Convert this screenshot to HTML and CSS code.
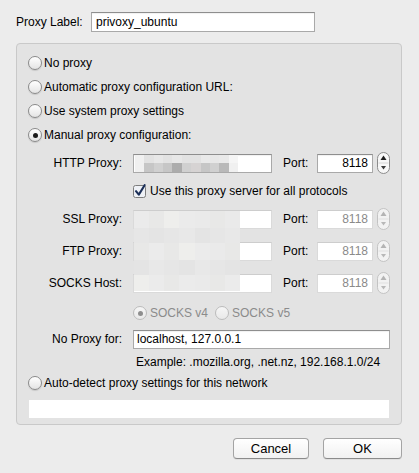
FILE: index.html
```html
<!DOCTYPE html>
<html>
<head>
<meta charset="utf-8">
<link rel="stylesheet" href="styles.css">
</head>
<body>
<div class="dialog">
  <div class="label-row">
    <span class="lbl">Proxy Label:</span>
    <div class="field label-field">privoxy_ubuntu</div>
  </div>

  <div class="panel">
    <div class="opt"><span class="radio"></span><span>No proxy</span></div>
    <div class="opt"><span class="radio"></span><span>Automatic proxy configuration URL:</span></div>
    <div class="opt"><span class="radio"></span><span>Use system proxy settings</span></div>
    <div class="opt"><span class="radio on"></span><span>Manual proxy configuration:</span></div>

    <div class="frow">
      <span class="flabel">HTTP Proxy:</span>
      <div class="field host">
        <div class="mosaic">
          <i class="t0"></i><i class="t1"></i><i class="t2"></i><i class="t1"></i><i class="t2"></i><i class="t1"></i><i class="t1"></i><i class="t3"></i><i class="t2"></i><i class="t3"></i><i class="t4"></i>
          <i class="t0"></i><i class="b1"></i><i class="b2"></i><i class="b1"></i><i class="b3"></i><i class="b2"></i><i class="b4"></i><i class="b1"></i><i class="b2"></i><i class="b5"></i><i class="t0"></i>
        </div>
      </div>
      <span class="plabel">Port:</span>
      <div class="field port">8118</div>
      <svg class="stepper" width="13" height="22" viewBox="0 0 13 22">
        <rect x="0.5" y="0.5" width="12" height="21" rx="6" fill="#f7f7f7" stroke="#8c8c8c"/>
        <line x1="1.5" y1="11" x2="11.5" y2="11" stroke="#d6d6d6"/>
        <path d="M6.5 3.5 L9.5 8 H3.5 Z" fill="#1e1e1e"/>
        <path d="M6.5 17.5 L9 14 H4 Z" fill="#3a3a3a"/>
      </svg>
    </div>

    <div class="crow">
      <svg class="check" width="14" height="14" viewBox="0 0 14 14">
        <rect x="0.5" y="1.5" width="12" height="12" rx="2" fill="#eef1f6" stroke="#7d7d7d"/>
        <path d="M3 7.2 L5.8 10.6 L11.6 1.2" fill="none" stroke="#1b2f58" stroke-width="2.1" stroke-linecap="round" stroke-linejoin="round"/>
      </svg>
      <span>Use this proxy server for all protocols</span>
    </div>

    <div class="frow">
      <span class="flabel">SSL Proxy:</span>
      <div class="field host dis"></div>
      <span class="plabel">Port:</span>
      <div class="field port dis">8118</div>
      <svg class="stepper" width="13" height="22" viewBox="0 0 13 22">
        <rect x="0.5" y="0.5" width="12" height="21" rx="6" fill="#f2f2f2" stroke="#c3c3c3"/>
        <line x1="1.5" y1="11" x2="11.5" y2="11" stroke="#e0e0e0"/>
        <path d="M6.5 3.5 L9.5 8 H3.5 Z" fill="#b4b4b4"/>
        <path d="M6.5 17.5 L9 14 H4 Z" fill="#b8b8b8"/>
      </svg>
    </div>
    <div class="frow">
      <span class="flabel">FTP Proxy:</span>
      <div class="field host dis"></div>
      <span class="plabel">Port:</span>
      <div class="field port dis">8118</div>
      <svg class="stepper" width="13" height="22" viewBox="0 0 13 22">
        <rect x="0.5" y="0.5" width="12" height="21" rx="6" fill="#f2f2f2" stroke="#c3c3c3"/>
        <line x1="1.5" y1="11" x2="11.5" y2="11" stroke="#e0e0e0"/>
        <path d="M6.5 3.5 L9.5 8 H3.5 Z" fill="#b4b4b4"/>
        <path d="M6.5 17.5 L9 14 H4 Z" fill="#b8b8b8"/>
      </svg>
    </div>
    <div class="frow">
      <span class="flabel">SOCKS Host:</span>
      <div class="field host dis"></div>
      <span class="plabel">Port:</span>
      <div class="field port dis">8118</div>
      <svg class="stepper" width="13" height="22" viewBox="0 0 13 22">
        <rect x="0.5" y="0.5" width="12" height="21" rx="6" fill="#f2f2f2" stroke="#c3c3c3"/>
        <line x1="1.5" y1="11" x2="11.5" y2="11" stroke="#e0e0e0"/>
        <path d="M6.5 3.5 L9.5 8 H3.5 Z" fill="#b4b4b4"/>
        <path d="M6.5 17.5 L9 14 H4 Z" fill="#b8b8b8"/>
      </svg>
    </div>

    <div class="srow">
      <span class="radio dis on"></span><span class="dtext">SOCKS v4</span>
      <span class="radio dis v5"></span><span class="dtext">SOCKS v5</span>
    </div>

    <div class="nrow">
      <span class="flabel">No Proxy for:</span>
      <div class="field noproxy">localhost, 127.0.0.1</div>
    </div>
    <div class="erow">Example: .mozilla.org, .net.nz, 192.168.1.0/24</div>
    <div class="opt arow"><span class="radio"></span><span>Auto-detect proxy settings for this network</span></div>
    <div class="urlfield"></div>

    <div class="blur">
      <i class="f1"></i><i class="f2"></i><i class="f3"></i><i class="f1"></i><i class="f4"></i><i class="f2"></i><i class="f4"></i>
      <i class="g1"></i><i class="g2"></i><i class="g1"></i><i class="g3"></i><i class="g2"></i><i class="g1"></i><i class="g3"></i>
      <i class="f2"></i><i class="f1"></i><i class="f2"></i><i class="f3"></i><i class="f1"></i><i class="f4"></i><i class="f2"></i>
      <i class="g2"></i><i class="g3"></i><i class="g1"></i><i class="g2"></i><i class="g3"></i><i class="g1"></i><i class="g2"></i>
      <i class="f3"></i><i class="f1"></i><i class="f2"></i><i class="f1"></i><i class="f4"></i><i class="f2"></i><i class="f1"></i>
    </div>
  </div>

  <div class="buttons">
    <button class="btn cancel">Cancel</button>
    <button class="btn ok">OK</button>
  </div>
</div>
</body>
</html>
```

FILE: styles.css
```css
* { box-sizing: border-box; }

html, body {
  margin: 0;
  width: 419px;
  height: 473px;
  overflow: hidden;
}

body {
  background: #ececec;
  font-family: "Liberation Sans", Arial, sans-serif;
  font-size: 12px;
  color: #000;
}

.dialog {
  padding: 12px 17px 0 16px;
}

.label-row {
  display: flex;
  align-items: center;
  height: 20px;
}

.label-row .lbl {
  width: 75px;
}

.field {
  background: #fff;
  border: 1px solid #a9a9a9;
  border-top-color: #8e8e8e;
  height: 19px;
  display: flex;
  align-items: center;
  padding: 0 4px;
  flex: none;
  box-shadow: inset 0 1px 1px rgba(0, 0, 0, 0.06);
  white-space: nowrap;
}

.label-field {
  width: 224px;
  height: 20px;
}

.panel {
  position: relative;
  margin-top: 11px;
  width: 386px;
  height: 382px;
  background: #e3e3e3;
  border: 1px solid #c9c9c9;
  border-radius: 4px;
  padding: 7px 0 0 11px;
}

.opt {
  display: flex;
  align-items: center;
  height: 24px;
}

.opt .radio {
  margin-right: 2px;
}

.radio {
  flex: none;
  width: 14px;
  height: 14px;
  border-radius: 50%;
  border: 1px solid #8a8a8a;
  background: linear-gradient(#ffffff, #e4e4e4);
  box-shadow: 0 1px 1px rgba(0, 0, 0, 0.12);
  display: flex;
  align-items: center;
  justify-content: center;
}

.radio.on::after {
  content: "";
  width: 5px;
  height: 5px;
  border-radius: 50%;
  background: #1a1a1a;
}

.radio.dis {
  border-color: #bcbcbc;
  background: linear-gradient(#f6f6f6, #e9e9e9);
  box-shadow: none;
}

.radio.dis.on::after {
  background: #8e8e8e;
}

.frow {
  display: flex;
  align-items: center;
  height: 32px;
}

.flabel {
  flex: none;
  width: 94px;
  text-align: right;
  margin-right: 11px;
}

.host {
  width: 139px;
  padding: 0 0 0 1px;
  align-items: stretch;
}

.host.dis,
.port.dis {
  border-color: #dadada;
  border-top-color: #cdcdcd;
  box-shadow: none;
}

.mosaic {
  width: 103px;
  display: grid;
  grid-template-columns: repeat(11, 1fr);
  grid-template-rows: 1fr 1fr;
}

.mosaic i { display: block; }
.t0 { background: #f0f0f0; }
.t1 { background: #e2e2e2; }
.t2 { background: #e7e7e7; }
.t3 { background: #e9e9e9; }
.t4 { background: #f5f5f5; }
.b1 { background: #c6c6c6; }
.b2 { background: #d0d0d0; }
.b3 { background: #acacac; }
.b4 { background: #d6d3d3; }
.b5 { background: #b9b9b9; }

.plabel {
  flex: none;
  width: 34px;
  margin-left: 11px;
}

.port {
  width: 56px;
  justify-content: flex-end;
  padding-right: 4px;
}

.port.dis {
  color: #8a8a8a;
}

.stepper {
  flex: none;
  margin-left: 4px;
  display: block;
}

.crow {
  display: flex;
  align-items: center;
  height: 24px;
  padding-left: 105px;
}

.check {
  flex: none;
  display: block;
  margin-right: 3px;
}

.srow {
  display: flex;
  align-items: center;
  height: 28px;
  padding-left: 105px;
}

.dtext {
  color: #8b8b8b;
  margin-left: 3px;
}

.radio.v5 {
  margin-left: 7px;
}

.nrow {
  display: flex;
  align-items: center;
  height: 24px;
}

.noproxy {
  width: 257px;
  padding: 0 3px;
}

.erow {
  display: flex;
  align-items: center;
  height: 22px;
  padding-left: 108px;
}

.arow {
  height: 20px;
}

.urlfield {
  margin: 7px 0 0 1px;
  width: 360px;
  height: 18px;
  background: #fff;
}

.blur {
  position: absolute;
  left: 117px;
  top: 167px;
  width: 106px;
  height: 80px;
  display: grid;
  grid-template-columns: repeat(7, 1fr);
  grid-template-rows: 17px 15px 17px 15px 16px;
}

.blur i { display: block; }
.f1 { background: #ebebeb; }
.f2 { background: #e8e8e7; }
.f3 { background: #eeeeec; }
.f4 { background: #eaeaea; }
.g1 { background: #e6e6e6; }
.g2 { background: #e4e4e4; }
.g3 { background: #e8e8e8; }

.buttons {
  display: flex;
  justify-content: flex-end;
  gap: 14px;
  margin-top: 13px;
}

.btn {
  height: 21px;
  padding: 0;
  font-family: "Liberation Sans", Arial, sans-serif;
  font-size: 13px;
  color: #000;
  border: 1px solid #a4a4a4;
  border-bottom-color: #8b8b8b;
  border-radius: 4px;
  background: linear-gradient(#ffffff, #f1f1f1);
  box-shadow: 0 1px 0 rgba(0, 0, 0, 0.05);
}

.cancel { width: 76px; }
.ok { width: 79px; }
```
